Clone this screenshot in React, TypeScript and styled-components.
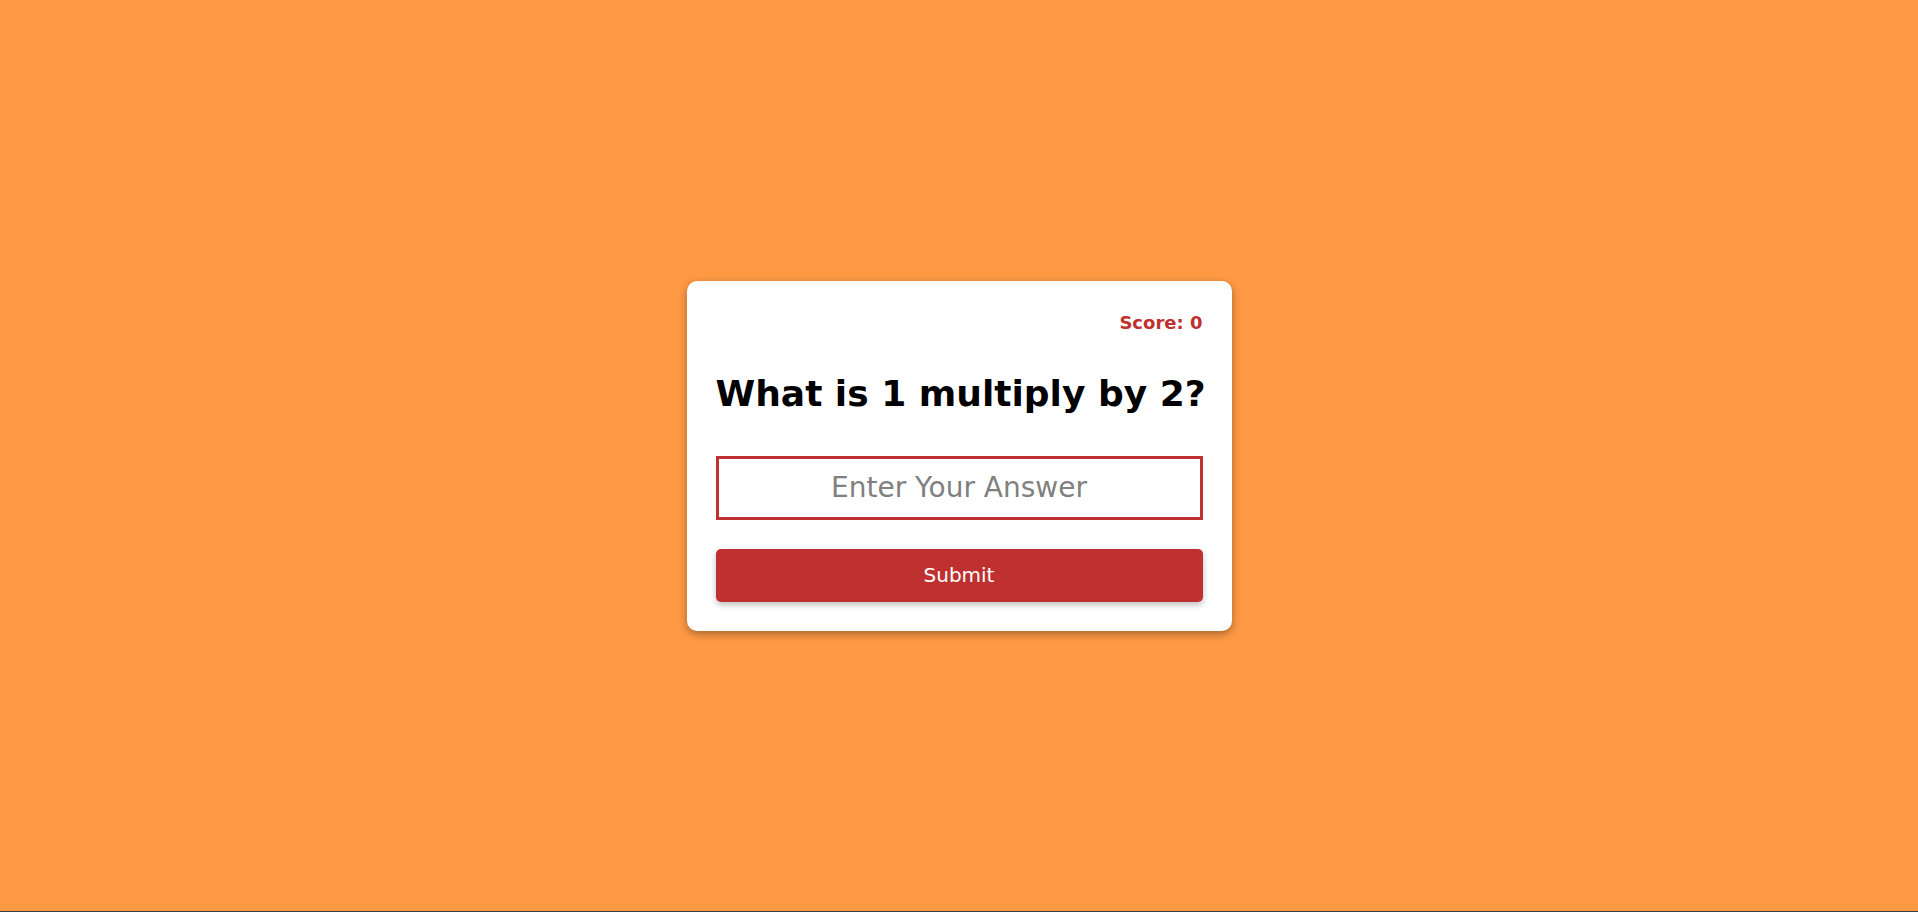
import { useState } from "react";
import styled, { createGlobalStyle } from "styled-components";

const GlobalStyle = createGlobalStyle`
  * {
    box-sizing: border-box;
  }
  body {
    margin: 0;
    font-family: "Comic Sans MS", "DejaVu Sans", sans-serif;
  }
`;

const Page = styled.div`
  height: 100vh;
  display: flex;
  justify-content: center;
  align-items: center;
  background: #ff9944;
  border-bottom: 1px solid #3d3d3d;
`;

const Card = styled.div`
  width: 545px;
  padding: 30px 29px 29px;
  display: flex;
  flex-direction: column;
  background: #fff;
  border-radius: 10px;
  box-shadow: 0 3px 8px rgba(0, 0, 0, 0.35);
`;

const Score = styled.div`
  align-self: flex-end;
  height: 24px;
  line-height: 24px;
  font-size: 18px;
  font-weight: bold;
  color: #bf3030;
`;

const Question = styled.h1`
  margin: 35px 0 38px;
  line-height: 48px;
  font-size: 36px;
  font-weight: bold;
  text-align: center;
  white-space: nowrap;
  color: #000;
`;

const AnswerInput = styled.input`
  height: 64px;
  width: 100%;
  border: 3px solid #bf3030;
  outline: none;
  font-family: inherit;
  font-size: 28px;
  text-align: center;
  color: #333;
  -moz-appearance: textfield;
  &::-webkit-inner-spin-button,
  &::-webkit-outer-spin-button {
    -webkit-appearance: none;
    margin: 0;
  }
  &::placeholder {
    color: #808080;
  }
`;

const SubmitButton = styled.button`
  margin-top: 29px;
  height: 53px;
  width: 100%;
  border: none;
  border-radius: 5px;
  background: #bf3030;
  color: #fff;
  font-family: inherit;
  font-size: 20px;
  cursor: pointer;
  box-shadow: 0 3px 6px rgba(0, 0, 0, 0.25);
`;

function App() {
  const [num1] = useState(1);
  const [num2] = useState(2);
  const [score, setScore] = useState(0);
  const [answer, setAnswer] = useState("");

  const submit = () => {
    // 정답이면 점수 +1
    if (Number(answer) === num1 * num2) setScore((prev) => prev + 1);
    setAnswer("");
  };

  return (
    <>
      <GlobalStyle />
      <Page>
        <Card>
          <Score>Score: {score}</Score>
          <Question>
            What is {num1} multiply by {num2}?
          </Question>
          <AnswerInput
            type="number"
            placeholder="Enter Your Answer"
            value={answer}
            onChange={(e) => setAnswer(e.target.value)}
          />
          <SubmitButton onClick={submit}>Submit</SubmitButton>
        </Card>
      </Page>
    </>
  );
}

export default App;
